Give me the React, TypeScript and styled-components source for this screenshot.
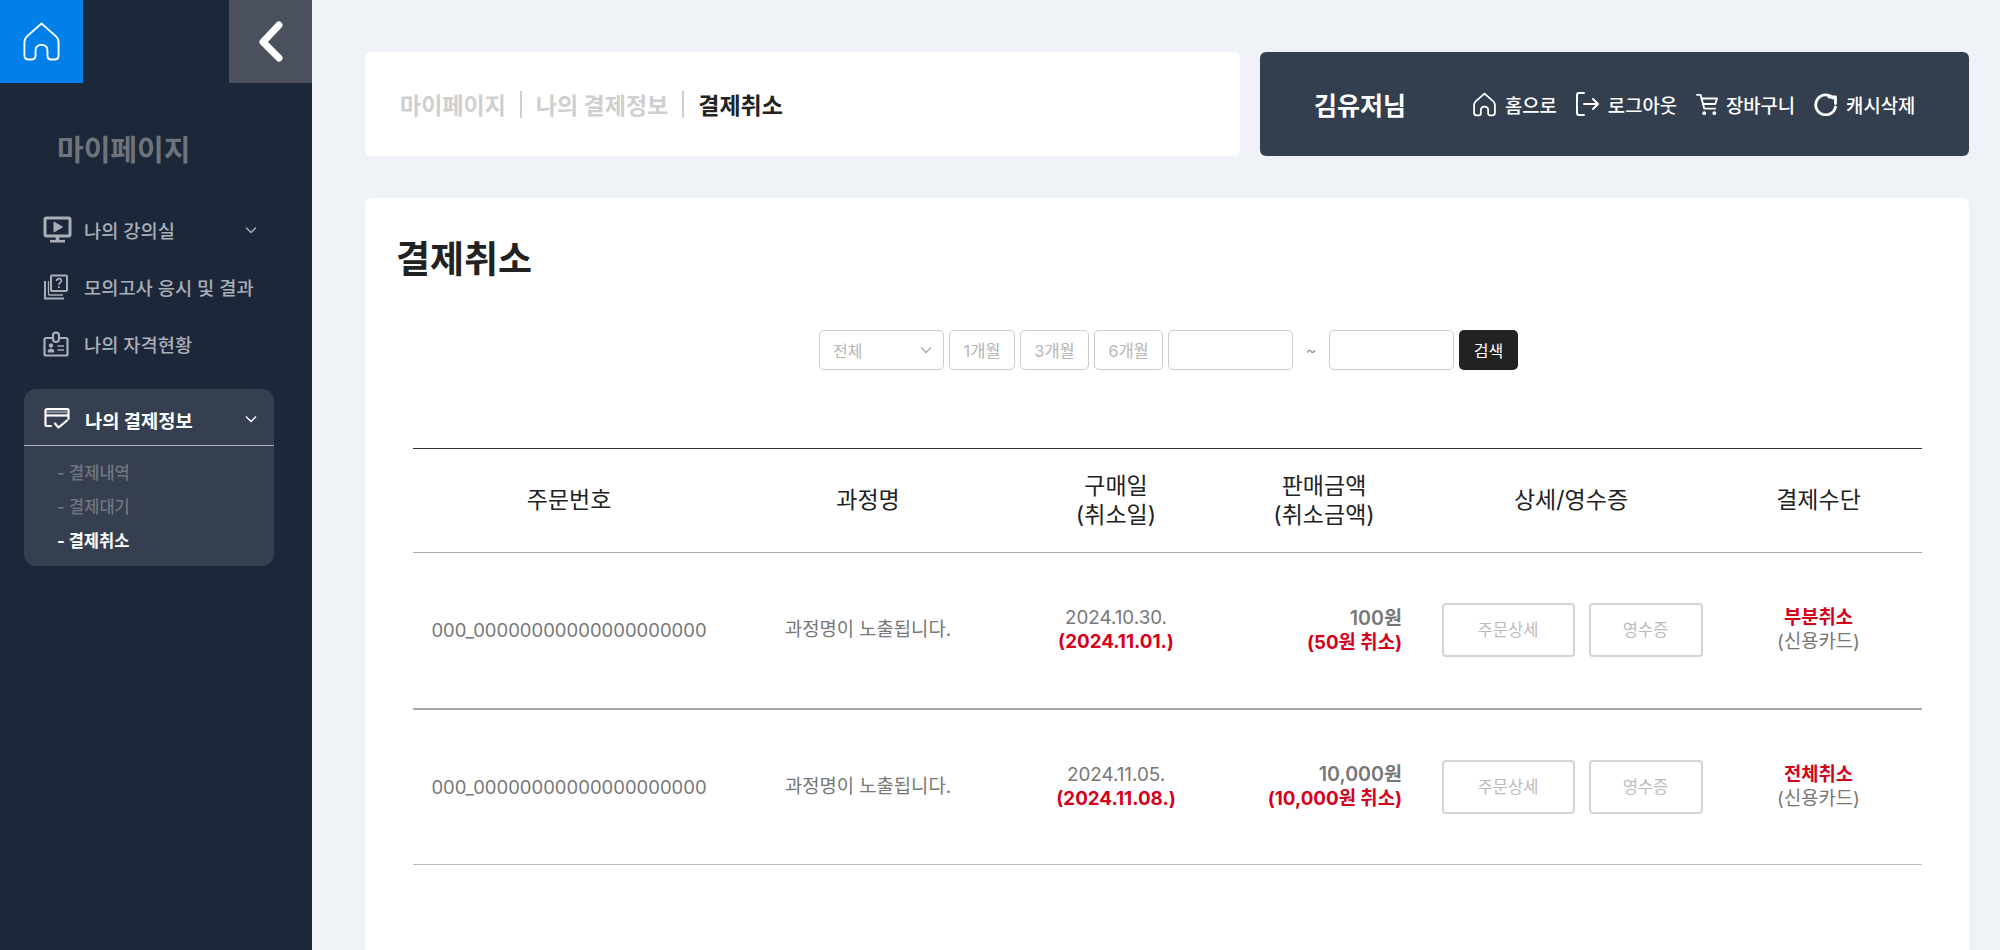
import React from 'react'
import styled, { createGlobalStyle } from 'styled-components'

const GlobalStyle = createGlobalStyle`
    html, body {
        margin: 0;
        padding: 0;
        height: 100%;
        overflow: hidden;
        background: #eff2f7;
        font-family: Inter, "Noto Sans CJK KR", "Noto Sans", sans-serif;
    }
    * {
        box-sizing: border-box;
    }
`

const HomeIcon = ({ size, width = 1.7 }: { size: number; width?: number }) => (
    <svg width={size} height={size} viewBox="0 0 24 24" fill="none" stroke="#fff" strokeWidth={width} strokeLinejoin="round" strokeLinecap="round">
        <path d="M12 1.5 L20.5 9 Q22 10.4 22 12.4 V20 Q22 22.5 19.5 22.5 H17.5 Q15.5 22.5 15.5 20.5 V17.5 Q15.5 14 12 14 Q8.5 14 8.5 17.5 V20.5 Q8.5 22.5 6.5 22.5 H4.5 Q2 22.5 2 20 V12.4 Q2 10.4 3.5 9 Z" />
    </svg>
)

const BackIcon = () => (
    <svg width="30" height="44" viewBox="0 0 30 44" fill="none" stroke="#fff" strokeWidth="7" strokeLinecap="round" strokeLinejoin="round">
        <path d="M23 5 L7 22 L23 38" />
    </svg>
)

const MonitorIcon = () => (
    <svg width="29" height="27" viewBox="0 0 29 27" fill="none" stroke="#a9aeb7" strokeWidth="3">
        <rect x="2" y="2" width="25" height="18" rx="1.5" />
        <path d="M11 6 L19.5 11 L11 16 Z" fill="#a9aeb7" strokeWidth="1" />
        <path d="M14.5 20 V24" strokeWidth="3.5" />
        <path d="M7 25.2 H22" strokeWidth="2.6" />
    </svg>
)

const ExamIcon = () => (
    <svg width="26" height="26" viewBox="0 0 26 26" fill="none" stroke="#a9aeb7" strokeWidth="2">
        <rect x="8" y="1.5" width="16" height="15.5" rx="1" />
        <path d="M2 7 V24.5 H21" />
        <path d="M5.5 7 V20 Q5.5 21 6.5 21 H20" strokeWidth="1.3" />
        <path d="M13.5 7 Q13.8 4.6 16 4.6 Q18.4 4.6 18.4 6.8 Q18.4 8 17 8.8 Q16 9.4 16 11" strokeWidth="1.6" />
        <path d="M16 12.2 V14" strokeWidth="1.8" />
    </svg>
)

const LicenseIcon = () => (
    <svg width="26" height="26" viewBox="0 0 26 26" fill="none" stroke="#a9aeb7" strokeWidth="2.2">
        <path d="M9 7 H3 Q1.5 7 1.5 8.5 V23 Q1.5 24.5 3 24.5 H23 Q24.5 24.5 24.5 23 V8.5 Q24.5 7 23 7 H17" />
        <rect x="10" y="1.5" width="6" height="9.5" rx="3" />
        <circle cx="8" cy="14.5" r="1.8" fill="#a9aeb7" strokeWidth="1" />
        <path d="M5 21 Q5 18 8 18 Q11 18 11 21 Z" fill="#a9aeb7" strokeWidth="1" />
        <path d="M14.5 15 H21 M14.5 19 H21" strokeWidth="1.6" />
    </svg>
)

const PaymentIcon = () => (
    <svg width="26" height="22" viewBox="0 0 26 22" fill="none" stroke="#fff" strokeWidth="2.2">
        <path d="M7 18 H3 Q1.5 18 1.5 16.5 V2.5 Q1.5 1.2 3 1.2 H23 Q24.5 1.2 24.5 2.5 V11" strokeLinecap="round" />
        <path d="M2 7.5 H24" strokeWidth="2.2" />
        <path d="M3 4.2 H23" stroke="#8d939e" strokeWidth="2" />
        <path d="M11 15.5 L14.5 19.5 L23 12.5" strokeLinecap="round" strokeLinejoin="round" />
    </svg>
)

const Chevron = ({ color }: { color: string }) => (
    <svg width="14" height="8" viewBox="0 0 14 8" fill="none" stroke={color} strokeWidth="1.4">
        <path d="M2 1.5 L7 6.5 L12 1.5" />
    </svg>
)

const LogoutIcon = () => (
    <svg width="24" height="24" viewBox="0 0 24 24" fill="none" stroke="#fff" strokeWidth="2" strokeLinecap="round" strokeLinejoin="round">
        <path d="M8 1 H3 Q1 1 1 3 V21 Q1 23 3 23 H8" />
        <path d="M8 12 H22 M17 7 L22 12 L17 17" />
    </svg>
)

const CartIcon = () => (
    <svg width="22" height="24" viewBox="0 0 24 24" fill="none" stroke="#fff" strokeWidth="2" strokeLinecap="round" strokeLinejoin="round">
        <path d="M1 2 H5 L9 17 H21" />
        <path d="M6 6 H23 L21 12 H8" />
        <circle cx="9" cy="22" r="1.1" fill="#fff" />
        <circle cx="20" cy="22" r="1.1" fill="#fff" />
    </svg>
)

const RefreshIcon = () => (
    <svg width="24" height="24" viewBox="0 0 24 24" fill="none" stroke="#fff" strokeWidth="2.8" strokeLinecap="round">
        <path d="M19 6 A10 10 0 1 0 21.5 15" />
        <path d="M15 5 H21.5 V11.5" strokeLinejoin="round" />
    </svg>
)

const navItems = [
    { label: '나의 강의실', icon: <MonitorIcon />, hasChevron: true },
    { label: '모의고사 응시 및 결과', icon: <ExamIcon />, hasChevron: false },
    { label: '나의 자격현황', icon: <LicenseIcon />, hasChevron: false },
]

const orders = [
    {
        id: '000_00000000000000000000',
        course: '과정명이 노출됩니다.',
        date: '2024.10.30.',
        cancelDate: '(2024.11.01.)',
        price: '100원',
        cancelPrice: '(50원 취소)',
        status: '부분취소',
    },
    {
        id: '000_00000000000000000000',
        course: '과정명이 노출됩니다.',
        date: '2024.11.05.',
        cancelDate: '(2024.11.08.)',
        price: '10,000원',
        cancelPrice: '(10,000원 취소)',
        status: '전체취소',
    },
]

export default function App(): JSX.Element {
    return (
        <Page>
            <GlobalStyle />
            <Sidebar>
                <SideTop>
                    <HomeButton>
                        <HomeIcon size={41} width={1.1} />
                    </HomeButton>
                    <BackButton>
                        <BackIcon />
                    </BackButton>
                </SideTop>
                <SideTitle>마이페이지</SideTitle>
                <NavList>
                    {navItems.map((item) => (
                        <NavItem key={item.label}>
                            <NavIcon>{item.icon}</NavIcon>
                            {item.label}
                            {item.hasChevron && (
                                <NavChevron>
                                    <Chevron color="#a9aeb7" />
                                </NavChevron>
                            )}
                        </NavItem>
                    ))}
                </NavList>
                <ActiveGroup>
                    <ActiveHeader>
                        <NavIcon>
                            <PaymentIcon />
                        </NavIcon>
                        나의 결제정보
                        <NavChevron>
                            <Chevron color="#fff" />
                        </NavChevron>
                    </ActiveHeader>
                    <SubList>
                        <SubItem>- 결제내역</SubItem>
                        <SubItem>- 결제대기</SubItem>
                        <SubItem active>- 결제취소</SubItem>
                    </SubList>
                </ActiveGroup>
            </Sidebar>
            <Content>
                <TopRow>
                    <Breadcrumb>
                        <Crumb>마이페이지</Crumb>
                        <CrumbSep />
                        <Crumb>나의 결제정보</Crumb>
                        <CrumbSep />
                        <Crumb current>결제취소</Crumb>
                    </Breadcrumb>
                    <UserCard>
                        <UserName>김유저님</UserName>
                        <UserActions>
                            <UserAction>
                                <HomeIcon size={25} />
                                홈으로
                            </UserAction>
                            <UserAction>
                                <LogoutIcon />
                                로그아웃
                            </UserAction>
                            <UserAction>
                                <CartIcon />
                                장바구니
                            </UserAction>
                            <UserAction>
                                <RefreshIcon />
                                캐시삭제
                            </UserAction>
                        </UserActions>
                    </UserCard>
                </TopRow>
                <MainCard>
                    <PageTitle>결제취소</PageTitle>
                    <FilterRow>
                        <SelectBox>
                            전체
                            <Chevron color="#aaa" />
                        </SelectBox>
                        <PeriodButton width={66}>1개월</PeriodButton>
                        <PeriodButton width={69}>3개월</PeriodButton>
                        <PeriodButton width={69}>6개월</PeriodButton>
                        <DateInput />
                        <Tilde>~</Tilde>
                        <DateInput />
                        <SearchButton>검색</SearchButton>
                    </FilterRow>
                    <OrderTable>
                        <colgroup>
                            <col style={{ width: 312 }} />
                            <col style={{ width: 286 }} />
                            <col style={{ width: 210 }} />
                            <col style={{ width: 206 }} />
                            <col style={{ width: 288 }} />
                            <col style={{ width: 207 }} />
                        </colgroup>
                        <thead>
                            <tr>
                                <Th>주문번호</Th>
                                <Th>과정명</Th>
                                <Th>
                                    구매일
                                    <br />
                                    (취소일)
                                </Th>
                                <Th>
                                    판매금액
                                    <br />
                                    (취소금액)
                                </Th>
                                <Th>상세/영수증</Th>
                                <Th>결제수단</Th>
                            </tr>
                        </thead>
                        <tbody>
                            {orders.map((order, i) => (
                                <Row key={i} last={i === orders.length - 1}>
                                    <IdTd>{order.id}</IdTd>
                                    <Td>{order.course}</Td>
                                    <Td>
                                        {order.date}
                                        <br />
                                        <Red>{order.cancelDate}</Red>
                                    </Td>
                                    <AmountTd>
                                        <Amount>{order.price}</Amount>
                                        <br />
                                        <Red>{order.cancelPrice}</Red>
                                    </AmountTd>
                                    <Td>
                                        <ActionCell>
                                            <GhostButton width={133}>주문상세</GhostButton>
                                            <GhostButton width={114}>영수증</GhostButton>
                                        </ActionCell>
                                    </Td>
                                    <Td>
                                        <Red>{order.status}</Red>
                                        <br />
                                        (신용카드)
                                    </Td>
                                </Row>
                            ))}
                        </tbody>
                    </OrderTable>
                </MainCard>
            </Content>
        </Page>
    )
}

const Page = styled.div`
    display: flex;
    height: 950px;
    overflow: hidden;
`

const Sidebar = styled.aside`
    flex: 0 0 312px;
    background: #1c2739;
`

const SideTop = styled.div`
    display: flex;
    justify-content: space-between;
    height: 83px;
`

const HomeButton = styled.div`
    display: flex;
    align-items: center;
    justify-content: center;
    width: 83px;
    background: #0080e8;
`

const BackButton = styled.div`
    display: flex;
    align-items: center;
    justify-content: center;
    width: 83px;
    background: #4a515c;
`

const SideTitle = styled.div`
    margin: 48px 0 0 57px;
    font-size: 29px;
    line-height: 40px;
    font-weight: 700;
    color: #6f737b;
`

const NavList = styled.div`
    display: flex;
    flex-direction: column;
    margin-top: 30px;
`

const NavItem = styled.div`
    display: flex;
    align-items: center;
    height: 57px;
    padding-left: 43px;
    font-size: 18.7px;
    font-weight: 500;
    color: #a9aeb7;
`

const NavIcon = styled.span`
    display: flex;
    align-items: center;
    justify-content: flex-start;
    flex: 0 0 41px;
`

const NavChevron = styled.span`
    display: flex;
    margin-left: auto;
    margin-right: 54px;
`

const ActiveGroup = styled.div`
    width: 250px;
    height: 177px;
    margin: 17px 0 0 24px;
    border-radius: 12px;
    background: #363f4f;
`

const ActiveHeader = styled.div`
    display: flex;
    align-items: center;
    height: 57px;
    padding: 4px 0 0 20px;
    border-bottom: 1px solid #a9aeb7;
    font-size: 18.7px;
    font-weight: 700;
    color: #fff;

    ${NavChevron} {
        margin-right: 16px;
    }
`

const SubList = styled.div`
    display: flex;
    flex-direction: column;
    padding: 10px 0 0 33px;
`

const SubItem = styled.div<{ active?: boolean }>`
    height: 34px;
    font-size: 16.5px;
    line-height: 34px;
    font-weight: ${(p) => (p.active ? 700 : 500)};
    color: ${(p) => (p.active ? '#fff' : '#71767f')};
`

const Content = styled.main`
    flex: 1;
    padding: 52px 31px 0 53px;
`

const TopRow = styled.div`
    display: flex;
    gap: 20px;
    height: 104px;
`

const Breadcrumb = styled.nav`
    display: flex;
    align-items: center;
    gap: 14px;
    flex: 0 0 875px;
    padding-left: 35px;
    border-radius: 6px;
    background: #fff;
`

const Crumb = styled.span<{ current?: boolean }>`
    font-size: 23px;
    font-weight: 700;
    color: ${(p) => (p.current ? '#222' : '#cfcfcf')};
`

const CrumbSep = styled.i`
    width: 2px;
    height: 27px;
    background: #cfcfcf;
`

const UserCard = styled.div`
    display: flex;
    align-items: center;
    flex: 1;
    padding-left: 54px;
    border-radius: 6px;
    background: #333f4f;
`

const UserName = styled.div`
    font-size: 25px;
    font-weight: 700;
    color: #fff;
`

const UserActions = styled.div`
    display: flex;
    gap: 19px;
    margin-left: 66px;
`

const UserAction = styled.div`
    display: flex;
    align-items: center;
    gap: 8px;
    font-size: 18.8px;
    font-weight: 500;
    color: #fff;
`

const MainCard = styled.section`
    height: 800px;
    margin-top: 42px;
    padding: 32px 47px 0 48px;
    border-radius: 6px 6px 0 0;
    background: #fff;
`

const PageTitle = styled.h1`
    margin: 0 0 0 -17px;
    font-size: 37px;
    line-height: 60px;
    font-weight: 700;
    color: #222;
`

const FilterRow = styled.div`
    display: flex;
    align-items: center;
    justify-content: center;
    gap: 5px;
    margin-top: 40px;
    padding-left: 2px;
    height: 40px;
`

const SelectBox = styled.div`
    display: flex;
    align-items: center;
    justify-content: space-between;
    width: 125px;
    height: 40px;
    padding: 0 10px 0 13px;
    border: 1px solid #ccc;
    border-radius: 5px;
    font-size: 16px;
    color: #b5b5b5;
`

const PeriodButton = styled.button<{ width: number }>`
    width: ${(p) => p.width}px;
    height: 40px;
    padding: 0;
    border: 1px solid #ccc;
    border-radius: 5px;
    background: #fff;
    font: inherit;
    font-size: 16.5px;
    color: #b5b5b5;
`

const DateInput = styled.div`
    width: 125px;
    height: 40px;
    border: 1px solid #ccc;
    border-radius: 5px;
`

const Tilde = styled.span`
    width: 26px;
    text-align: center;
    font-size: 16px;
    color: #999;
`

const SearchButton = styled.button`
    width: 59px;
    height: 40px;
    padding: 0;
    border: 0;
    border-radius: 5px;
    background: #222;
    font: inherit;
    font-size: 16px;
    color: #fff;
`

const OrderTable = styled.table`
    width: 1509px;
    margin-top: 78px;
    border-collapse: collapse;
    table-layout: fixed;
`

const Th = styled.th`
    height: 104px;
    padding: 0;
    border-top: 1px solid #333;
    border-bottom: 1px solid #aaa;
    font-size: 23px;
    line-height: 29px;
    font-weight: 400;
    color: #222;
    text-align: center;
`

const Row = styled.tr<{ last: boolean }>`
    height: 156px;
    border-bottom: ${(p) => (p.last ? '1px solid #bbb' : '2px solid #aaa')};
`

const Td = styled.td`
    padding: 0;
    font-size: 18.8px;
    line-height: 24px;
    color: #777;
    text-align: center;
`

const IdTd = styled(Td)`
    font-size: 18.5px;
`

const AmountTd = styled(Td)`
    padding-right: 25px;
    text-align: right;
`

const Amount = styled.span`
    font-size: 19.6px;
    font-weight: 600;
`

const Red = styled.span`
    font-weight: 700;
    color: #d6001c;
`

const ActionCell = styled.div`
    display: flex;
    justify-content: center;
    gap: 14px;
    padding-left: 2px;
`

const GhostButton = styled.button<{ width: number }>`
    width: ${(p) => p.width}px;
    height: 54px;
    padding: 0;
    border: 2px solid #d4d4d4;
    border-radius: 4px;
    background: #fff;
    font: inherit;
    font-size: 16.5px;
    color: #bbb;
`
